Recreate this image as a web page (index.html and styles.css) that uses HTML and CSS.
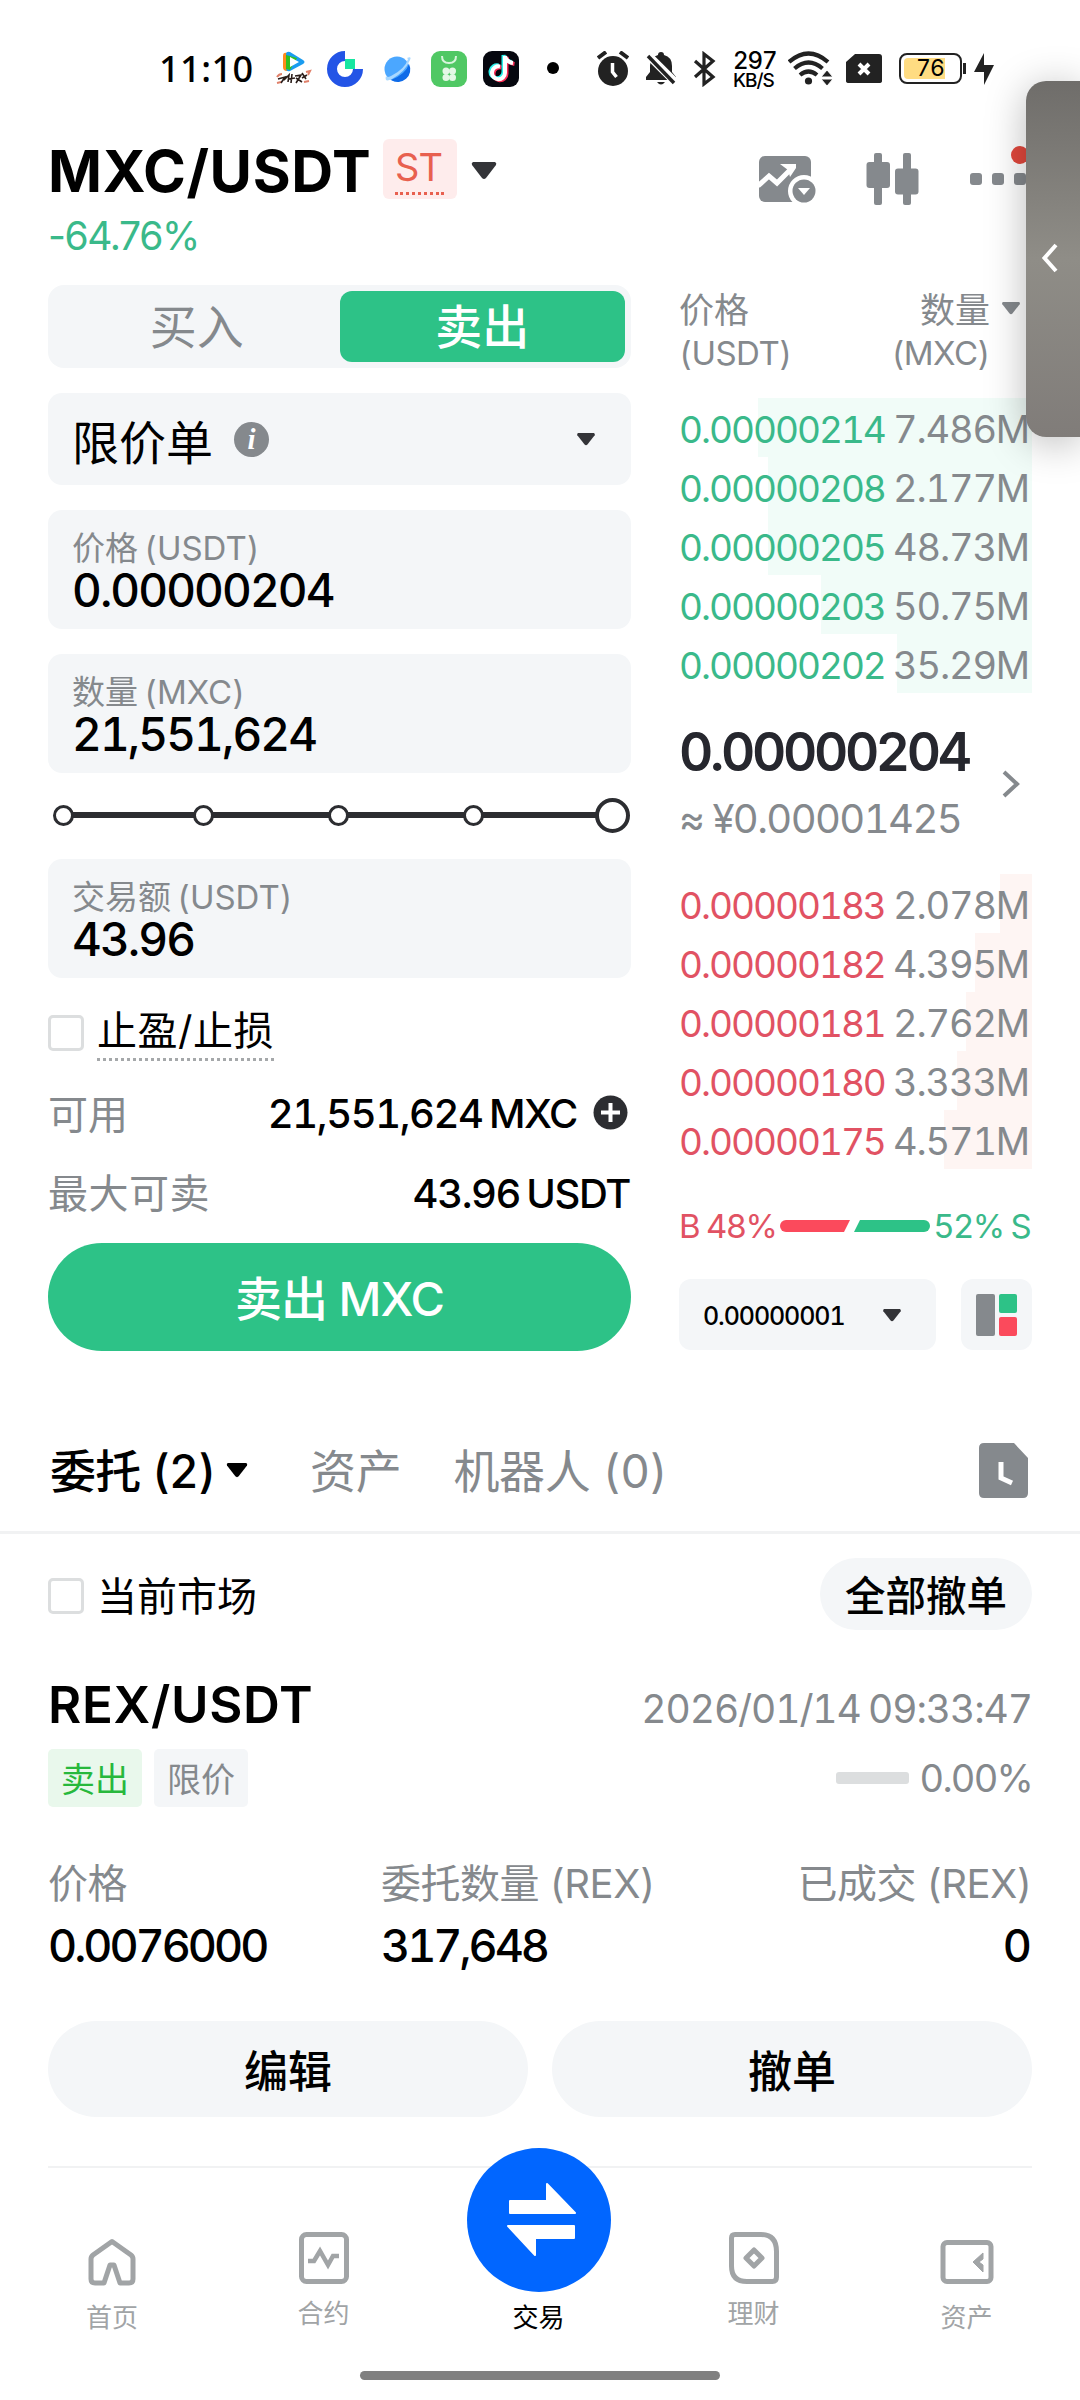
FILE: index.html
```html
<!DOCTYPE html>
<html lang="zh-CN">
<head>
    <meta charset="UTF-8">
    <meta name="viewport" content="width=device-width, initial-scale=1.0">
    <title>MXC/USDT</title>
    <link rel="stylesheet" href="styles.css">
</head>
<body>
    <!-- 状态栏 -->
    <div class="status-bar">
        <span class="time">11:10</span>
        <div class="app-icons">
            <svg width="38" height="38" viewBox="0 0 38 38">
                <path d="M9 6q0-4 4-3l3 1v16l-3 1q-4 0-4-4z" fill="#ff8a1c"/>
                <path d="M12 4q0-3 4-2l13 8q3 2 0 4l-13 7q-4 1-4-3z" fill="#1a9cf0"/>
                <path d="M12 5l11 3-7 12-4-1z" fill="#30c020"/>
                <path d="M16 7l9 5-9 5z" fill="#fff"/>
                <path d="M3 27q2-3 5-3M32 22l4-1-2 4M3 33l4-1M30 32l5-1" stroke="#e0806a" stroke-width="2" fill="none"/>
                <path d="M4 29l7-2-4 6m3-3l5-5-1 7m1-3l6-1m-3-4l-1 9m4-7l6-1-5 8m0-5l6 4m0-9l4 6m-4-1l5-3" stroke="#2a1d1a" stroke-width="1.6" fill="none"/>
            </svg>
            <svg width="38" height="38" viewBox="0 0 38 38">
                <path d="M19 6A13 13 0 1 0 32 19" fill="none" stroke="#2354e6" stroke-width="10"/>
                <rect x="19" y="9" width="10" height="10" fill="#17e6a1"/>
            </svg>
            <svg width="38" height="38" viewBox="0 0 38 38">
                <circle cx="19" cy="19" r="12.500" fill="#4ba7ff"/>
                <path d="M13 30Q28 24 31 14A12.500 12.500 0 0 1 13 30z" fill="#0f6be8"/>
                <path d="M29 8q5-2 3 2-5 12-18 19-8 4-6-3 1 2 5 0Q27 19 30 9z" fill="#a9d8ff"/>
            </svg>
            <svg width="38" height="38" viewBox="0 0 38 38">
                <rect x="1" y="1" width="36" height="36" rx="9" fill="#50c864"/>
                <path d="M12 6q0 7 7 7t7-7" fill="none" stroke="#d8f5dc" stroke-width="2"/>
                <g fill="#e4f8e6"><circle cx="16" cy="21" r="3.500"/><circle cx="22.500" cy="21" r="3.500"/><circle cx="16" cy="27.500" r="3.500"/><circle cx="22.500" cy="27.500" r="3.500"/></g>
            </svg>
            <svg width="38" height="38" viewBox="0 0 38 38">
                <rect x="1" y="1" width="36" height="36" rx="9" fill="#06070f"/>
                <g fill="none" stroke-width="4">
                    <path d="M18 16.500a6.500 6.500 0 1 0 5 6.300V6q1 6 8 7" transform="translate(1.500 1)" stroke="#fb2d56"/>
                    <path d="M18 16.500a6.500 6.500 0 1 0 5 6.300V6q1 6 8 7" transform="translate(-1.500 -1)" stroke="#2bf0ea"/>
                    <path d="M18 16.500a6.500 6.500 0 1 0 5 6.300V6q1 6 8 7" stroke="#fff"/>
                </g>
            </svg>
        </div>
        <span class="more-dot"></span>
        <svg class="alarm" width="32" height="36" viewBox="0 0 32 36">
            <circle cx="16" cy="20" r="15" fill="#222"/>
            <path d="M1 7l8-6M31 7l-8-6" stroke="#222" stroke-width="4"/>
            <path d="M15.500 12v9l4 5" fill="none" stroke="#fff" stroke-width="3.500"/>
        </svg>
        <svg class="bell" width="32" height="36" viewBox="0 0 32 36">
            <path d="M16 1q3 0 3 3 8 2 8 11v6l4 5v3H1v-3l4-5v-6Q5 6 13 4q0-3 3-3zM12 31h8q-4 5-8 0z" fill="#222"/>
            <path d="M2 3l29 29" stroke="#fff" stroke-width="8"/>
            <path d="M3 5l26 27" stroke="#222" stroke-width="3.500"/>
        </svg>
        <svg class="bt" width="24" height="36" viewBox="0 0 24 36">
            <path d="M2 10l18 16-9 7V3l9 7L2 26" fill="none" stroke="#222" stroke-width="3.200"/>
        </svg>
        <div class="speed"><b>297</b><span>KB/S</span></div>
        <svg class="wifi" width="46" height="36" viewBox="0 0 46 36">
            <g fill="none" stroke="#222" stroke-width="4.200">
                <path d="M1 11q19.500-17 39 0"/>
                <path d="M6.500 17.500q14-12 28 0"/>
                <path d="M12 24q8.500-7 17 0"/>
            </g>
            <circle cx="20.500" cy="30" r="3.600" fill="#222"/>
            <path d="M33 26h12l-6-7zM33 28h12l-6 7z" fill="#222" stroke="#fff"/>
        </svg>
        <svg class="sim" width="36" height="30" viewBox="0 0 36 30">
            <path d="M9 0h24q3 0 3 3v24q0 2-3 2H3q-3 0-3-2V8z" fill="#222"/>
            <path d="M13 10l10 10M23 10L13 20" stroke="#fff" stroke-width="4"/>
        </svg>
        <div class="battery"><span class="battery-level">76</span></div>
        <svg class="bolt" width="20" height="32" viewBox="0 0 20 32">
            <path d="M10 0v12h10L10 32V19H0z" fill="#222"/>
        </svg>
    </div>

    <!-- 交易对 -->
    <header class="header">
        <div class="pair-row">
            <h1>MXC/USDT</h1>
            <span class="st-tag"><span>ST</span></span>
            <svg class="pair-caret" width="26" height="18" viewBox="0 0 26 18"><path d="M2 0h22q2 1 1 3L15 16q-2 2-4 0L1 3Q0 1 2 0z" fill="#333438"/></svg>
            <div class="header-tools">
                <svg width="58" height="48" viewBox="0 0 58 48">
                    <rect x="1" y="1" width="52" height="46" rx="6" fill="#85898d"/>
                    <path d="M0 31l11-10 8 7 16-16" fill="none" stroke="#fff" stroke-width="5"/>
                    <path d="M22 9h16v4l-6 9-2-7z" fill="#fff"/>
                    <circle cx="46" cy="36" r="16" fill="#fff"/>
                    <circle cx="46" cy="36" r="11.500" fill="#85898d"/>
                    <path d="M40 33h12l-6 7z" fill="#fff"/>
                </svg>
                <svg width="54" height="52" viewBox="0 0 54 52" fill="#85898d">
                    <rect x="8" y="0" width="8" height="52" rx="2"/>
                    <rect x="0.500" y="9" width="23.500" height="26" rx="3"/>
                    <rect x="37" y="0" width="8" height="52" rx="2"/>
                    <rect x="29" y="15.500" width="23.500" height="26" rx="3"/>
                </svg>
                <div class="dots"><i></i><i></i><i></i></div>
            </div>
        </div>
        <div class="change">-64.76%</div>
    </header>

    <main class="trade">
        <!-- 下单 -->
        <section class="order-form">
            <div class="side-tabs">
                <div class="side-tab">买入</div>
                <div class="side-tab active">卖出</div>
            </div>

            <div class="type-select">
                <span>限价单</span>
                <i class="info">i</i>
                <svg class="caret" width="20" height="13" viewBox="0 0 26 18"><path d="M2 0h22q2 1 1 3L15 16q-2 2-4 0L1 3Q0 1 2 0z" fill="#333438"/></svg>
            </div>

            <div class="field">
                <label>价格<span>(USDT)</span></label>
                <div class="value">0.00000204</div>
            </div>
            <div class="field">
                <label>数量<span>(MXC)</span></label>
                <div class="value">21,551,624</div>
            </div>

            <div class="slider">
                <i></i><i></i><i></i><i></i><i class="thumb"></i>
            </div>

            <div class="field amount">
                <label>交易额<span>(USDT)</span></label>
                <div class="value">43.96</div>
            </div>

            <div class="check-row">
                <span class="checkbox"></span>
                <span class="tpsl">止盈/止损</span>
            </div>

            <div class="info-row">
                <span class="name">可用</span>
                <span class="num">21,551,624 MXC</span>
                <svg class="plus" width="35" height="35" viewBox="0 0 35 35"><circle cx="17.500" cy="17.500" r="17" fill="#2c2d31"/><path d="M17.500 8v19M8 17.500h19" stroke="#fff" stroke-width="4"/></svg>
            </div>
            <div class="info-row max">
                <span class="name">最大可卖</span>
                <span class="num">43.96 USDT</span>
            </div>

            <button class="sell-button">卖出 MXC</button>
        </section>

        <!-- 盘口 -->
        <section class="book">
            <div class="book-head">
                <div>价格<br><span>(USDT)</span></div>
                <div class="right">数量<br><span>(MXC)</span></div>
                <svg width="20" height="13" viewBox="0 0 26 18"><path d="M2 0h22q2 1 1 3L15 16q-2 2-4 0L1 3Q0 1 2 0z" fill="#85898d"/></svg>
            </div>

            <div class="rows green">
                <div class="row" style="--depth: 274px"><b>0.00000214</b><span>7.486M</span></div>
                <div class="row" style="--depth: 264px"><b>0.00000208</b><span>2.177M</span></div>
                <div class="row" style="--depth: 264px"><b>0.00000205</b><span>48.73M</span></div>
                <div class="row" style="--depth: 211px"><b>0.00000203</b><span>50.75M</span></div>
                <div class="row" style="--depth: 135px"><b>0.00000202</b><span>35.29M</span></div>
            </div>

            <div class="last-price">
                <div>
                    <div class="price">0.00000204</div>
                    <div class="fiat">≈ ¥0.00001425</div>
                </div>
                <svg width="20" height="30" viewBox="0 0 20 30"><path d="M3 3l13 12L3 27" fill="none" stroke="#85898d" stroke-width="4"/></svg>
            </div>

            <div class="rows red">
                <div class="row" style="--depth: 32px"><b>0.00000183</b><span>2.078M</span></div>
                <div class="row" style="--depth: 57px"><b>0.00000182</b><span>4.395M</span></div>
                <div class="row" style="--depth: 66px"><b>0.00000181</b><span>2.762M</span></div>
                <div class="row" style="--depth: 75px"><b>0.00000180</b><span>3.333M</span></div>
                <div class="row" style="--depth: 88px"><b>0.00000175</b><span>4.571M</span></div>
            </div>

            <div class="ratio">
                <span class="buy">B 48%</span>
                <svg width="150" height="12" viewBox="0 0 150 12"><path d="M6 0h64l-6 12H6A6 6 0 0 1 6 0z" fill="#fb4a5c"/><path d="M80 0h64a6 6 0 0 1 0 12H74z" fill="#2dc287"/></svg>
                <span class="sell">52% S</span>
            </div>

            <div class="book-tools">
                <div class="precision">
                    <span>0.00000001</span>
                    <svg width="20" height="13" viewBox="0 0 26 18"><path d="M2 0h22q2 1 1 3L15 16q-2 2-4 0L1 3Q0 1 2 0z" fill="#333438"/></svg>
                </div>
                <div class="book-mode">
                    <svg width="42" height="42" viewBox="0 0 42 42"><rect width="19" height="42" rx="2" fill="#85898d"/><rect x="23" width="18" height="19" rx="2" fill="#2dc287"/><rect x="23" y="23" width="18" height="19" rx="2" fill="#fb4a5c"/></svg>
                </div>
            </div>
        </section>
    </main>

    <!-- 委托列表 -->
    <nav class="list-tabs">
        <span class="active">委托 (2)</span>
        <svg class="caret" width="24" height="15" viewBox="0 0 26 18"><path d="M2 0h22q2 1 1 3L15 16q-2 2-4 0L1 3Q0 1 2 0z" fill="#000"/></svg>
        <span class="assets">资产</span>
        <span class="bots">机器人 (0)</span>
        <svg class="history" width="50" height="55" viewBox="0 0 50 55"><path d="M5 0h30l14 15v35q0 5-5 5H5q-5 0-5-5V5q0-5 5-5z" fill="#85898d"/><path d="M22 19v16l11 5" fill="none" stroke="#fff" stroke-width="5"/></svg>
    </nav>

    <section class="orders">
        <div class="filter">
            <span class="checkbox"></span>
            <span class="filter-name">当前市场</span>
            <button class="cancel-all">全部撤单</button>
        </div>

        <div class="order-title">
            <h2>REX/USDT</h2>
            <span class="date">2026/01/14 09:33:47</span>
        </div>
        <div class="order-tags">
            <span class="tag sell">卖出</span>
            <span class="tag">限价</span>
            <span class="progress"></span>
            <span class="percent">0.00%</span>
        </div>

        <div class="order-data">
            <div><div class="name">价格</div><div class="num">0.0076000</div></div>
            <div><div class="name">委托数量 (REX)</div><div class="num">317,648</div></div>
            <div class="right"><div class="name">已成交 (REX)</div><div class="num">0</div></div>
        </div>

        <div class="order-actions">
            <button>编辑</button>
            <button>撤单</button>
        </div>
    </section>

    <!-- 底部导航 -->
    <footer class="tabbar">
        <div class="tab home">
            <svg width="50" height="48" viewBox="0 0 50 48"><path d="M25 3.500L44 17q2 1.500 2 4v20q0 4-4 4h-9l-6-18h-4l-6 18H8q-4 0-4-4V21q0-2.500 2-4z" fill="none" stroke="#a1a4a6" stroke-width="5" stroke-linejoin="round"/></svg>
            <span>首页</span>
        </div>
        <div class="tab raised futures">
            <svg width="50" height="52" viewBox="0 0 50 52"><rect x="2.500" y="2.500" width="45" height="47" rx="5" fill="none" stroke="#a1a4a6" stroke-width="5"/><path d="M9 29h6l6-10 8 14 5-9h6" fill="none" stroke="#a1a4a6" stroke-width="4.500"/></svg>
            <span>合约</span>
        </div>
        <div class="tab center">
            <svg width="144" height="144" viewBox="0 0 144 144"><circle cx="72" cy="72" r="72" fill="#0166ff"/><path d="M43 53h37V36l28 29H43zM107 78H41l27 29V90h39z" fill="#fff" stroke="#fff" stroke-width="2" stroke-linejoin="round"/></svg>
            <span>交易</span>
        </div>
        <div class="tab raised finance">
            <svg width="50" height="52" viewBox="0 0 50 52"><path d="M6 2.500h26q15.500 0 15.500 17V45q0 4.500-4 4.500H18Q2.500 49.500 2.500 34V6q0-3.500 3.500-3.500z" fill="none" stroke="#a1a4a6" stroke-width="5"/><path d="M25 18l8 8-8 8-8-8z" fill="none" stroke="#a1a4a6" stroke-width="5" stroke-linejoin="round"/></svg>
            <span>理财</span>
        </div>
        <div class="tab wallet">
            <svg width="54" height="44" viewBox="0 0 54 44"><rect x="3" y="2.500" width="48" height="39" rx="4" fill="none" stroke="#a1a4a6" stroke-width="5"/><path d="M43 13v6l-4 3 4 3v7L33 22z" fill="#a1a4a6" stroke="#a1a4a6"/></svg>
            <span>资产</span>
        </div>
    </footer>
    <div class="home-bar"></div>

    <!-- 侧边悬浮面板 -->
    <div class="side-panel">
        <svg width="18" height="30" viewBox="0 0 18 30"><path d="M15 2L3.500 15 15 28" fill="none" stroke="#fff" stroke-width="4"/></svg>
    </div>
</body>
</html>
```
FILE: styles.css
```css
* {
    box-sizing: border-box;
}
body {
    margin: 0;
    width: 1080px;
    height: 2400px;
    position: relative;
    overflow: hidden;
    background-color: #fff;
    color: #000;
    font-family: Inter, "Noto Sans CJK SC", sans-serif;
    font-feature-settings: "tnum";
}
svg {
    display: block;
    flex: none;
}
h1, h2 {
    margin: 0;
}
button {
    border: 0;
    padding: 0;
    color: #000;
    font-family: inherit;
    background-color: #f4f6f8;
}
i {
    font-style: normal;
}

/* 状态栏 */
.status-bar {
    display: flex;
    align-items: flex-start;
    height: 124px;
    padding: 14px 0 0 159px;
}
.status-bar > * {
    flex: none;
}
.time {
    width: 96px;
    font-size: 36px;
    line-height: 40px;
    margin-top: 35px;
    letter-spacing: 0.500px;
    font-family: "Noto Sans", sans-serif;
    font-weight: 500;
}
.app-icons {
    display: flex;
    gap: 14px;
    margin: 36px 0 0 19px;
}
.more-dot {
    width: 12px;
    height: 12px;
    border-radius: 50%;
    background-color: #000;
    margin: 48px 0 0 27px;
}
.alarm {
    margin: 37px 0 0 38px;
}
.bell {
    margin: 37px 0 0 16px;
}
.bt {
    margin: 37px 0 0 16px;
}
.speed {
    width: 46px;
    margin: 35px 0 0 16px;
    display: flex;
    flex-direction: column;
    letter-spacing: -1px;
}
.speed b {
    font-size: 24px;
    font-weight: 500;
    line-height: 24px;
}
.speed span {
    font-size: 19px;
    font-weight: 500;
    line-height: 16px;
}
.wifi {
    margin: 37px 0 0 9px;
}
.sim {
    margin: 40px 0 0 12px;
}
.battery {
    position: relative;
    width: 63px;
    height: 31px;
    margin: 39px 0 0 17px;
    padding: 3px;
    border: 2px solid #222;
    border-radius: 8px;
}
.battery::after {
    content: "";
    position: absolute;
    right: -6px;
    top: 8px;
    width: 3px;
    height: 11px;
    background-color: #222;
}
.battery-level {
    display: block;
    width: 41px;
    height: 21px;
    padding-left: 12px;
    border-radius: 4px 0 0 4px;
    background-color: #ffdc82;
    font-size: 23px;
    line-height: 21px;
    letter-spacing: -1px;
}
.bolt {
    margin: 39px 0 0 12px;
}

/* 交易对 */
.header {
    height: 161px;
    padding-left: 48px;
}
.pair-row {
    display: flex;
    align-items: center;
    height: 94px;
}
.pair-row h1 {
    width: 335px;
    font-size: 58px;
    font-weight: 700;
    line-height: 60px;
    letter-spacing: 0.600px;
}
.st-tag {
    width: 74px;
    height: 60px;
    margin-top: -4px;
    padding: 8px 13px 0 12px;
    border-radius: 6px;
    background-color: #feecec;
    color: #e8604f;
}
.st-tag span {
    display: block;
    height: 48px;
    font-size: 38px;
    line-height: 40px;
    letter-spacing: -1px;
    border-bottom: 3px dotted #e8604f;
}
.pair-caret {
    margin-left: 14px;
}
.header-tools {
    display: flex;
    align-items: center;
    margin: 16px 0 0 261px;
}
.header-tools svg + svg {
    margin-left: 50px;
}
.dots {
    position: relative;
    display: flex;
    gap: 10px;
    margin-left: 50px;
}
.dots i {
    width: 12px;
    height: 12px;
    border-radius: 3px;
    background-color: #85898d;
}
.dots::after {
    content: "";
    position: absolute;
    left: 41px;
    top: -27px;
    width: 18px;
    height: 18px;
    border-radius: 50%;
    background-color: #e2483d;
}
.change {
    font-size: 39px;
    line-height: 35px;
    letter-spacing: -1.400px;
    font-feature-settings: normal;
    color: #3ab98a;
}

.trade {
    display: flex;
    justify-content: space-between;
    height: 1097px;
    padding: 0 48px;
}

/* 下单 */
.order-form {
    width: 583px;
}
.side-tabs {
    display: flex;
    height: 83px;
    padding: 6px;
    border-radius: 16px;
    background-color: #f4f6f8;
}
.side-tab {
    flex: 1;
    border-radius: 12px;
    text-align: center;
    font-size: 47px;
    line-height: 72px;
    color: #85898d;
}
.side-tab.active {
    background-color: #2dc287;
    color: #fff;
    font-weight: 500;
}
.type-select {
    display: flex;
    align-items: center;
    height: 92px;
    margin-top: 25px;
    padding: 0 35px 0 24px;
    border-radius: 14px;
    background-color: #f4f6f8;
    font-size: 47px;
}
.info {
    width: 35px;
    height: 35px;
    margin-left: 21px;
    border-radius: 50%;
    background-color: #85898d;
    color: #fff;
    font: italic bold 29px/34px "Liberation Serif", serif;
    text-align: center;
}
.type-select .caret {
    margin-left: auto;
}
.field {
    height: 119px;
    margin-top: 25px;
    padding: 20px 24px;
    border-radius: 14px;
    background-color: #f4f6f8;
}
.field label {
    display: block;
    font-size: 33px;
    line-height: 36px;
    color: #85898d;
}
.field label span {
    margin-left: 6px;
    font-size: 33px;
}
.value {
    font-size: 46px;
    font-weight: 500;
    line-height: 48px;
    letter-spacing: -1.900px;
}
.slider {
    display: flex;
    align-items: center;
    height: 36px;
    margin: 24px 0 0;
    padding-left: 5px;
    background: linear-gradient(#2c2d31, #2c2d31) no-repeat 14px 50% / 550px 6px;
}
.slider i {
    width: 21px;
    height: 21px;
    margin-right: 114px;
    border: 3px solid #2c2d31;
    border-radius: 50%;
    background-color: #fff;
}
.slider i:first-child {
    margin-right: 119px;
}
.slider i.thumb {
    width: 35px;
    height: 35px;
    margin: 0 0 0 -3px;
    border-width: 4px;
}
.field.amount {
    margin-top: 26px;
}
.check-row {
    display: flex;
    height: 50px;
    margin-top: 33px;
}
.checkbox {
    width: 36px;
    height: 36px;
    margin-top: 4px;
    border: 3px solid #dcdedf;
    border-radius: 5px;
}
.tpsl {
    height: 50px;
    margin-left: 13px;
    font-size: 40px;
    line-height: 40px;
    letter-spacing: 0.500px;
    border-bottom: 3px dotted #a5a8aa;
}
.info-row {
    display: flex;
    align-items: center;
    height: 50px;
    margin-top: 26px;
    font-size: 40px;
    line-height: 50px;
}
.info-row .name {
    color: #85898d;
    margin-top: 6px;
}
.info-row .num {
    margin: 3px 0 0 auto;
    font-weight: 500;
    letter-spacing: -1.400px;
    word-spacing: -3px;
}
.plus {
    margin: 0 3px 0 16px;
}
.info-row.max {
    margin-top: 32px;
}
.info-row.max .name {
    margin-top: 0;
    letter-spacing: 0.500px;
}
.info-row.max .num {
    margin: 0 1px 0 auto;
}
.sell-button {
    display: block;
    width: 100%;
    height: 108px;
    margin-top: 24px;
    padding-bottom: 3px;
    border-radius: 54px;
    background-color: #2dc287;
    color: #fff;
    font-size: 47px;
    font-weight: 500;
    letter-spacing: -1px;
}

/* 盘口 */
.book {
    width: 353px;
}
.book-head {
    display: flex;
    height: 113px;
    padding-top: 4px;
    font-size: 35px;
    line-height: 42px;
    color: #85898d;
}
.book-head span {
    font-size: 33px;
    letter-spacing: -0.5px;
}
.book-head .right {
    margin-left: auto;
}
.book-head svg {
    margin: 13px 11px 0 11px;
}
.right {
    text-align: right;
}
.row {
    display: flex;
    justify-content: space-between;
    height: 59px;
    font-size: 37px;
    line-height: 63px;
    letter-spacing: -2px;
    white-space: nowrap;
    background: linear-gradient(#f1fcf8, #f1fcf8) no-repeat right / var(--depth) 100%;
}
.row b {
    font-weight: 400;
    color: #3ab98a;
}
.row span {
    margin-right: 3px;
    font-size: 38px;
    letter-spacing: -1.200px;
    color: #85898d;
}
.red .row {
    background-image: linear-gradient(#fef5f3, #fef5f3);
}
.red .row b {
    color: #e15263;
}
.last-price {
    display: flex;
    align-items: center;
    justify-content: space-between;
    height: 181px;
    padding-right: 11px;
}
.price {
    padding-top: 6px;
    font-size: 53px;
    font-weight: 600;
    line-height: 64px;
    letter-spacing: -3.300px;
    color: #26272e;
}
.fiat {
    font-size: 40px;
    line-height: 70px;
    letter-spacing: -1.600px;
    color: #85898d;
}
.ratio {
    display: flex;
    align-items: center;
    justify-content: space-between;
    height: 40px;
    margin-top: 37px;
    font-size: 33px;
    letter-spacing: -1.700px;
}
.buy {
    color: #e15263;
}
.ratio .sell {
    margin-right: 2px;
    color: #3ab98a;
}
.book-tools {
    display: flex;
    justify-content: space-between;
    margin-top: 33px;
}
.precision {
    display: flex;
    align-items: center;
    justify-content: space-between;
    width: 257px;
    height: 71px;
    padding: 2px 34px 0 24px;
    border-radius: 12px;
    background-color: #f4f6f8;
    font-size: 25px;
    font-weight: 500;
    letter-spacing: -1.100px;
}
.book-mode {
    width: 71px;
    height: 71px;
    padding: 15px;
    border-radius: 12px;
    background-color: #f4f6f8;
}

/* 委托列表 */
.list-tabs {
    display: flex;
    align-items: center;
    height: 152px;
    padding: 28px 51px 0 50px;
    border-bottom: 3px solid #f1f2f3;
    font-size: 46px;
    line-height: 50px;
    letter-spacing: -0.300px;
    color: #85898d;
    white-space: nowrap;
}
.list-tabs .active {
    width: 175px;
    font-weight: 500;
    letter-spacing: -0.800px;
    color: #000;
}
.assets {
    margin-left: 61px;
}
.bots {
    margin-left: 52px;
}
.history {
    margin-left: auto;
}
.orders {
    height: 610px;
    margin: 0 48px;
    border-bottom: 2px solid #f1f2f3;
}
.filter {
    display: flex;
    align-items: center;
    height: 72px;
    margin-top: 24px;
}
.filter .checkbox {
    margin-top: 3px;
}
.filter-name {
    margin-left: 13px;
    font-size: 40px;
}
.cancel-all {
    width: 212px;
    height: 72px;
    margin-left: auto;
    padding-bottom: 2px;
    border-radius: 36px;
    font-size: 40.500px;
    font-weight: 500;
}
.order-title {
    display: flex;
    justify-content: space-between;
    height: 60px;
    margin-top: 45px;
}
.order-title h2 {
    font-size: 51px;
    font-weight: 600;
    line-height: 60px;
    letter-spacing: 0.700px;
}
.date {
    font-size: 39px;
    line-height: 68px;
    letter-spacing: -1.100px;
    word-spacing: -2px;
    color: #85898d;
}
.order-tags {
    display: flex;
    align-items: center;
    height: 58px;
    margin-top: 14px;
}
.tag {
    width: 94px;
    height: 58px;
    margin-right: 12px;
    border-radius: 5px;
    background-color: #f4f6f8;
    color: #85898d;
    font-size: 34px;
    line-height: 61px;
    text-align: center;
}
.tag.sell {
    background-color: #e9f8ec;
    color: #27b83c;
}
.progress {
    width: 73px;
    height: 12px;
    margin-left: auto;
    border-radius: 3px;
    background-color: #dcdedf;
}
.percent {
    margin-left: 11px;
    font-size: 38px;
    letter-spacing: -1.800px;
    color: #85898d;
}
.order-data {
    display: grid;
    grid-template-columns: 333px 1fr 1fr;
    height: 112px;
    margin-top: 52px;
}
.order-data .name {
    font-size: 40px;
    line-height: 50px;
    letter-spacing: -0.500px;
    color: #85898d;
}
.order-data .num {
    font-size: 45px;
    font-weight: 500;
    line-height: 74px;
    letter-spacing: -3px;
}
.order-data .right .num {
    letter-spacing: 0;
}
.order-actions {
    display: flex;
    gap: 24px;
    margin-top: 50px;
}
.order-actions button {
    flex: 1;
    height: 96px;
    border-radius: 48px;
    font-size: 44px;
    font-weight: 500;
}

/* 底部导航 */
.tabbar {
    display: flex;
    height: 203px;
    color: #a1a4a6;
    font-size: 26px;
    line-height: 30px;
}
.tab {
    display: flex;
    flex-direction: column;
    align-items: center;
    padding-top: 70px;
}
.tab svg {
    margin-bottom: 17px;
}
.tab.home {
    width: 224px;
}
.tab.raised {
    padding-top: 64px;
}
.tab.raised svg {
    margin-bottom: 15px;
}
.tab.futures {
    width: 199px;
}
.tab.center {
    width: 231px;
    padding-top: 0;
    margin-top: -20px;
    color: #000;
}
.tab.center svg {
    margin-bottom: 11px;
}
.tab.finance {
    width: 199px;
}
.tab.wallet {
    width: 227px;
    padding-top: 72px;
}
.tab.wallet svg {
    margin-bottom: 19px;
}
.home-bar {
    width: 360px;
    height: 9px;
    margin: 0 auto;
    border-radius: 5px;
    background-color: #808080;
}

.side-panel {
    position: absolute;
    top: 81px;
    right: 0;
    width: 54px;
    height: 356px;
    padding: 162px 0 0 15px;
    border-radius: 20px 0 0 20px;
    background: linear-gradient(#6f6d6a, #8f8d87 50%, #807c79);
    box-shadow: 0 6px 40px rgba(0, 0, 0, 0.28);
}
```
